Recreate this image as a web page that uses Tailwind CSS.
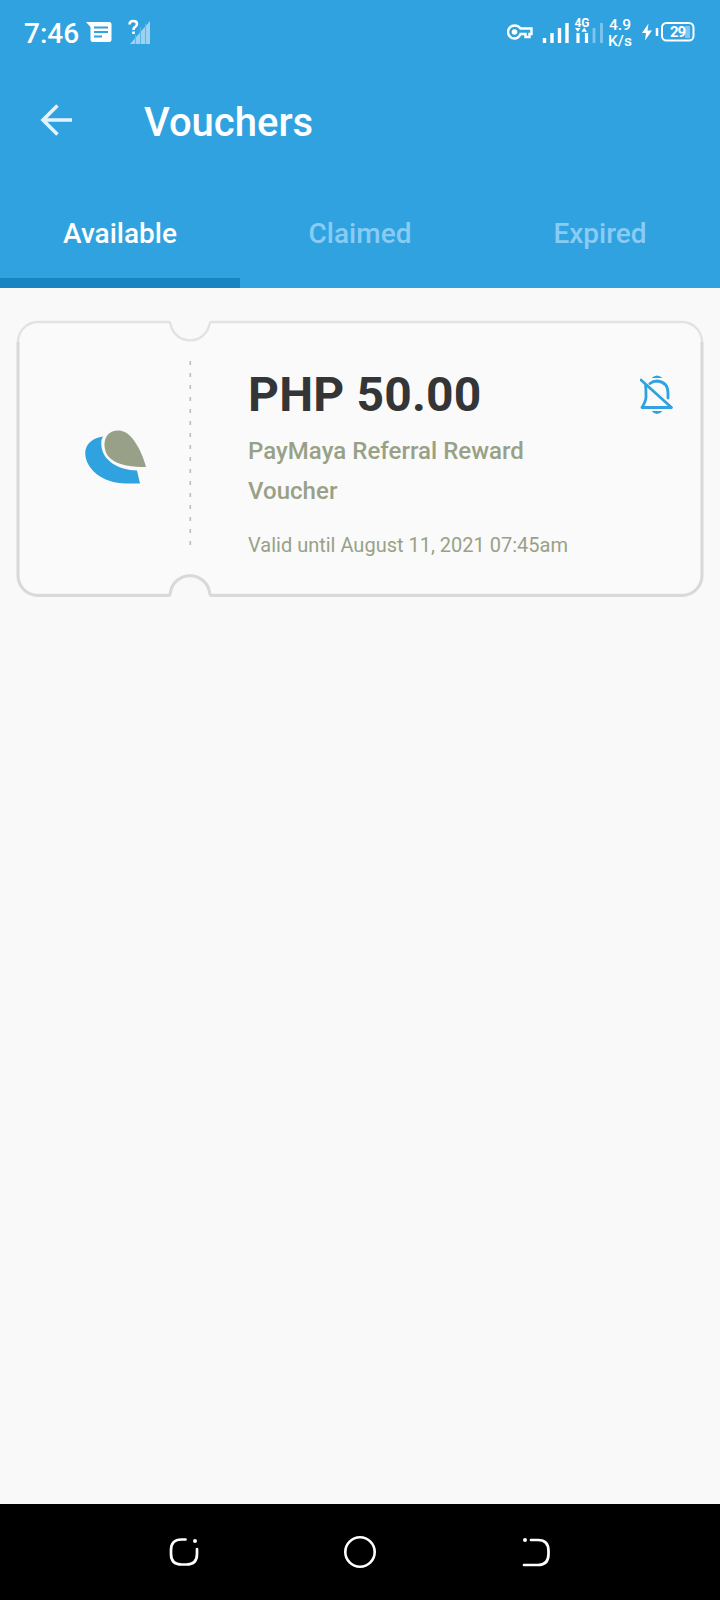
<!DOCTYPE html>
<html lang="en">
<head>
<meta charset="utf-8">
<title>Vouchers</title>
<script src="https://cdn.jsdelivr.net/npm/@tailwindcss/browser@4"></script>
</head>
<body class="flex h-[1600px] w-[720px] flex-col overflow-hidden bg-[#f9f9f9] font-['Roboto',sans-serif]">
<header class="flex h-[288px] flex-col bg-[#30a2e0] text-white">
  <div class="flex h-16 items-center pl-6">
    <span class="w-[55px] pt-[3px] text-[28px] leading-8 font-medium whitespace-nowrap">7:46</span>
    <svg class="ml-[7px] h-[22px] w-[26px]" viewBox="0 0 26 22"><path d="M0 1H23Q25.500 1 25.500 3V18.500Q25.500 21 23 21H7Q4.500 21 4.500 18.500V6Z" fill="white"/><path d="M8 6.500H22M8 11H22M8 15.500H16" stroke="#30a2e0" stroke-width="2"/></svg>
    <svg class="ml-4 h-[26px] w-[24px]" viewBox="0 0 24 26"><path d="M2 25L22 2V25Z" fill="#9bd2f3"/><path d="M7.500 8V25M12.500 8V25M17.500 5V25" stroke="#5cb7e8" stroke-width="1"/><path d="M0 0H10V16H0Z" fill="#30a2e0"/><path d="M1.500 5.500Q1.500 2 5.200 2Q9 2 9 5Q9 7 6.700 8.300Q5.500 9.300 5.500 11M5.500 12.500V15" fill="none" stroke="white" stroke-width="2.600"/></svg>
    <div class="ml-auto flex items-center pr-[25px]">
      <svg class="h-4 w-[26px]" viewBox="0 0 26 16"><path d="M13.500 4.500H24.500V10H22.500V13H18.500V10H13.500Q11.500 14.500 7.500 14.500A6.500 6.500 0 1 1 7.500 1.500Q11.500 1.500 13.500 4.500Z" fill="none" stroke="white" stroke-width="2.400"/><circle cx="7.500" cy="8" r="2.800" fill="white"/></svg>
      <svg class="ml-2 h-[30px] w-[64px] -translate-y-[2px]" viewBox="0 0 64 30"><path d="M3.500 23V28M11 18V28M18.500 13V28M26 8V28" stroke="white" stroke-width="3.400"/><path d="M37 18V28M45.500 18V28" stroke="white" stroke-width="3.200"/><path d="M53 13V28M60.500 8V28" stroke="#7fc6ee" stroke-width="2.800"/><path d="M34 13H39.500L36.700 16.800ZM40.500 16.800H46L43.200 12.500Z" fill="white"/><text x="33.500" y="11.800" font-family="Roboto" font-size="13" font-weight="700" fill="white" textLength="15" lengthAdjust="spacingAndGlyphs">4G</text></svg>
      <div class="ml-[2.5px] flex w-[26px] flex-col items-center pt-[2px] text-[15.500px] leading-4 font-medium whitespace-nowrap"><span>4.9</span><span>K/s</span></div>
      <svg class="ml-[9px] h-5 w-[53px]" viewBox="0 0 53 20"><path d="M6.500 1.500L0 11H4L3 18.500L10 8.500H5.500Z" fill="white"/><path d="M15 6V14" stroke="white" stroke-width="2.500"/><rect x="20" y="1" width="31.500" height="17.500" rx="4.500" fill="none" stroke="white" stroke-width="2"/><path d="M43 4H48V16H43Z" fill="#7fc6ee"/><text x="28" y="15.300" font-family="Roboto" font-size="15" font-weight="700" fill="white" textLength="16">29</text></svg>
    </div>
  </div>
  <div class="flex h-[114px] items-center pl-10 pb-[2px]">
    <svg class="mb-[1px] h-8 w-8" viewBox="0 0 32 32" fill="none" stroke="#e3f3fc" stroke-width="3.600"><path d="M17.500 1.500L3 16L17.500 30.500M3 16H32"/></svg>
    <h1 class="ml-[72px] pt-[6px] text-[40px] leading-[48px] font-medium whitespace-nowrap">Vouchers</h1>
  </div>
  <nav class="grid h-[110px] grid-cols-3 text-center text-[28px] leading-8 font-medium">
    <div class="border-b-[10px] border-[#1685c1] pt-10">Available</div>
    <div class="pt-10 text-[#88ccf4]">Claimed</div>
    <div class="pt-10 text-[#88ccf4]">Expired</div>
  </nav>
</header>
<main class="flex-1 px-4 pt-8">
  <section class="relative flex h-[278px] text-[#98a187]">
    <svg class="absolute inset-0" width="688" height="278" viewBox="0 0 688 278" fill="none">
      <path d="M22 2H153Q154 2 154.500 4A19.800 19.800 0 0 0 193.500 4Q194 2 195 2H666A20 20 0 0 1 686 22V255A20 20 0 0 1 666 275H195Q194 275 193.500 272A19.800 19.800 0 0 0 154.500 272Q154 275 153 275H22A20 20 0 0 1 2 255V22A20 20 0 0 1 22 2Z" fill="#fafafa" stroke="#e1e3e3" stroke-width="2.400"/>
      <path d="M2 22V255A20 20 0 0 0 22 275.500H153Q154 275.500 154.500 272A19.800 19.800 0 0 1 193.500 272Q194 275.500 195 275.500H666A20 20 0 0 0 686 255V22" stroke="#d8dada" stroke-width="3"/>
      <path d="M174.300 41V233" stroke="#bcbebe" stroke-width="1.600" stroke-dasharray="4 8"/>
    </svg>
    <div class="relative flex w-[174px] items-start pt-[110px] pl-[68px]">
      <svg class="h-[54px] w-[63px]" viewBox="0 0 63 54"><path d="M19 6.500Q4 9 1.500 20C-1 36 16 53 42 53.500H56L53 40.500C33 40 15 29 17.500 10Z" fill="#30a2e0"/><path d="M34.500 0.500C24 0.500 20 8 20.500 16C21.500 30 34 37 62 37C58 22 48 0.500 34.500 0.500Z" fill="#98a187"/></svg>
    </div>
    <div class="relative flex-1 pt-[47px] pl-[58px]">
      <h2 class="text-[48px] leading-[56px] font-bold tracking-[0.2px] whitespace-nowrap text-[#333536]">PHP 50.00</h2>
      <p class="mt-[8px] w-[330px] text-[24px] leading-10 font-medium tracking-[0.04px]">PayMaya Referral Reward Voucher</p>
      <p class="mt-[22px] text-[20px] leading-6 whitespace-nowrap">Valid until August 11, 2021 07:45am</p>
    </div>
    <div class="relative w-16 pt-[55px]">
      <svg class="h-10 w-[34px]" viewBox="0 0 34 40" fill="none" stroke="#30a2e0" stroke-width="2.800"><path d="M5.500 11Q6 12 6 22Q6 26 2 32.500H31.500L1 5M10 8.500Q13 6 17 6Q28 7 28 18V23" stroke-linejoin="round" stroke-linecap="round"/><path d="M11.500 3Q17 -2 22.500 3ZM11.500 36H22.500Q17 42 11.500 36Z" fill="#30a2e0" stroke="none"/></svg>
    </div>
  </section>
</main>
<footer class="grid h-24 grid-cols-[184px_auto_184px] items-center justify-between bg-black px-[92px] text-white">
  <svg class="mx-auto h-8 w-8" viewBox="0 0 32 32" fill="none" stroke="white" stroke-width="2.700" stroke-linecap="round"><path d="M17.500 3.500H13.500Q3 3.500 3 14V18Q3 28.500 13.500 28.500H18.500Q29 28.500 29 18V13"/><circle cx="27" cy="5" r="2" fill="white" stroke="none"/></svg>
  <svg class="h-8 w-8" viewBox="0 0 32 32"><circle cx="16" cy="16" r="14.700" fill="none" stroke="white" stroke-width="2.600"/></svg>
  <svg class="mx-auto h-8 w-8" viewBox="0 0 32 32" fill="none" stroke="white" stroke-width="2.700" stroke-linecap="round"><path d="M11 4H18Q28.500 4 28.500 15V18Q28.500 29 18 29H4"/><circle cx="5" cy="4" r="2" fill="white" stroke="none"/></svg>
</footer>
</body>
</html>
